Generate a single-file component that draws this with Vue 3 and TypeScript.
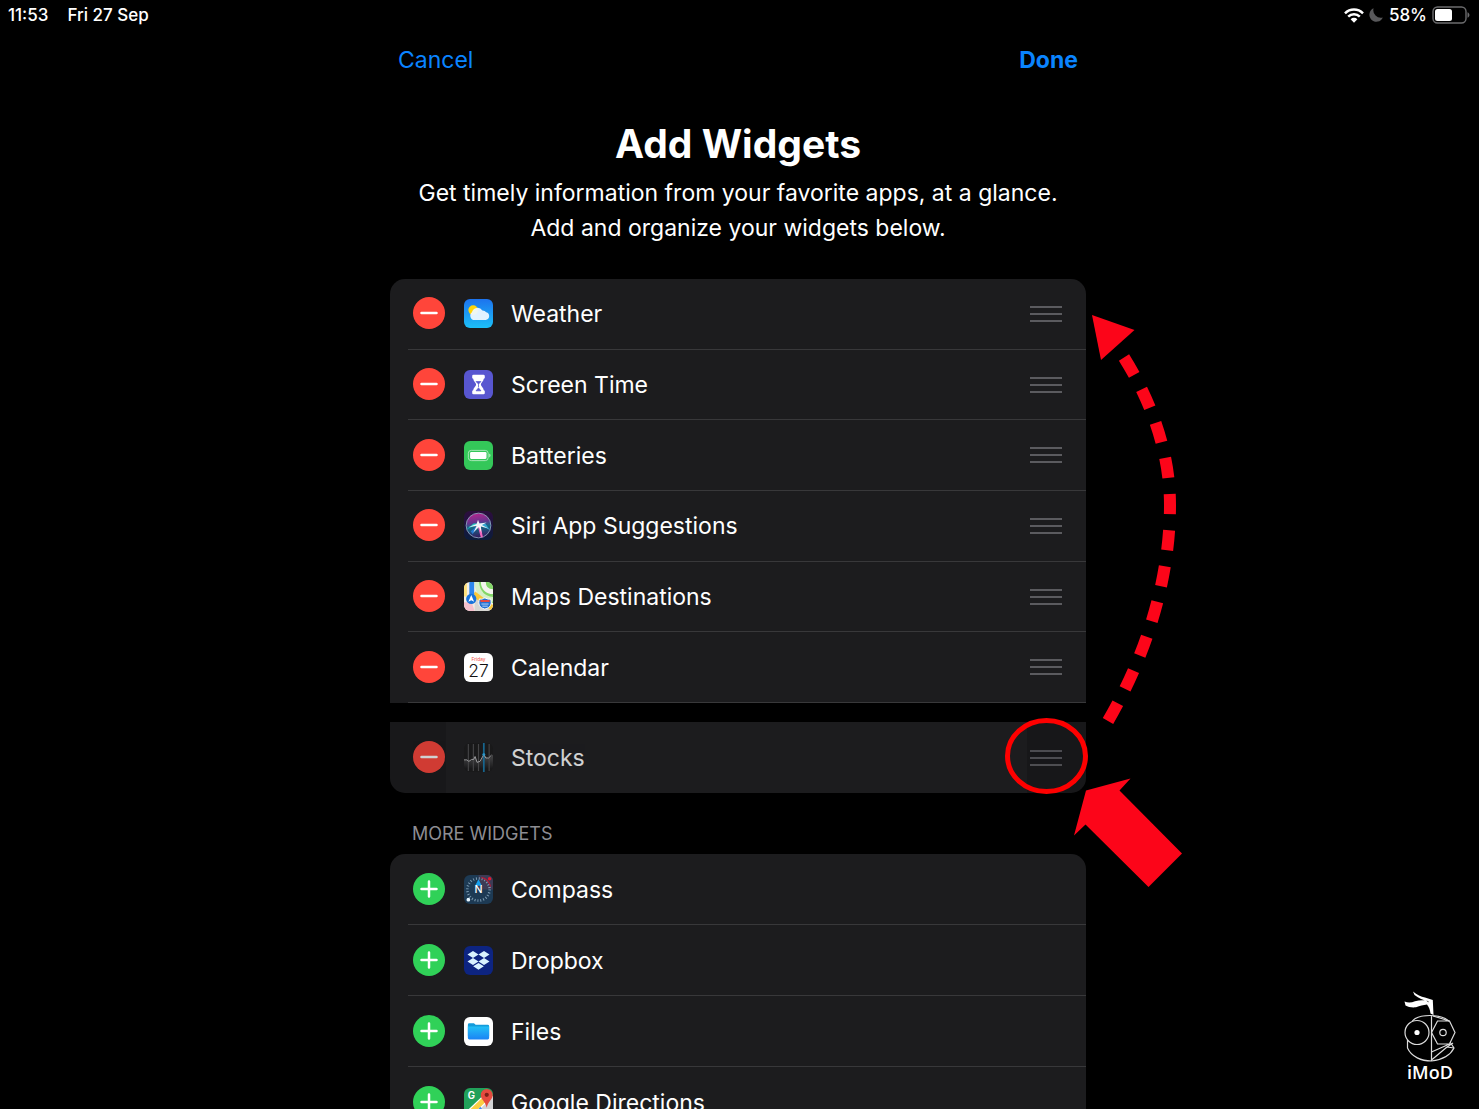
<script setup lang="ts">
interface Widget {
  id: string
  name: string
}

const active: Widget[] = [
  { id: 'weather', name: 'Weather' },
  { id: 'screentime', name: 'Screen Time' },
  { id: 'batteries', name: 'Batteries' },
  { id: 'siri', name: 'Siri App Suggestions' },
  { id: 'maps', name: 'Maps Destinations' },
  { id: 'calendar', name: 'Calendar' },
]
const dragged: Widget[] = [{ id: 'stocks', name: 'Stocks' }]
const more: Widget[] = [
  { id: 'compass', name: 'Compass' },
  { id: 'dropbox', name: 'Dropbox' },
  { id: 'files', name: 'Files' },
  { id: 'google', name: 'Google Directions' },
]

const groups = [
  { key: 'active', items: active, add: false },
  { key: 'dragged', items: dragged, add: false },
  { key: 'more', items: more, add: true },
]
</script>

<template>
  <div class="screen">
    <header class="status">
      <div class="status-side">
        <span>11:53</span>
        <span>Fri 27 Sep</span>
      </div>
      <div class="status-side right">
        <svg viewBox="0 0 20 15" width="20" height="15" aria-hidden="true">
          <g fill="none" stroke="#fff" stroke-width="2.5">
            <path d="M1 5.3a12.8 12.8 0 0 1 18 0" />
            <path d="M4.2 8.7a8.3 8.3 0 0 1 11.6 0" />
          </g>
          <path d="M6.6 11.2a4.9 4.9 0 0 1 6.8 0L10 14.7z" fill="#fff" />
        </svg>
        <svg viewBox="0 0 15 14" width="15" height="14" aria-hidden="true">
          <path d="M4.600.3a7 7 0 1 0 9.200 9.200A7.500 7.500 0 0 1 4.600.3z" fill="#58585a" />
        </svg>
        <span>58%</span>
        <svg viewBox="0 0 38 18" width="38" height="18" aria-hidden="true">
          <rect x="1" y="1" width="33" height="16" rx="4.5" fill="none" stroke="#6c6c6e" stroke-width="1.4" />
          <path d="M35.5 6.300c2.600 1 2.600 4.400 0 5.400z" fill="#6c6c6e" />
          <rect x="3" y="3" width="17" height="12" rx="2.500" fill="#fff" />
        </svg>
      </div>
    </header>

    <main class="panel">
      <nav class="actions">
        <button type="button" class="text-btn">Cancel</button>
        <button type="button" class="text-btn strong">Done</button>
      </nav>
      <h1>Add Widgets</h1>
      <p class="intro">
        Get timely information from your favorite apps, at a glance.<br />
        Add and organize your widgets below.
      </p>

      <template v-for="group in groups" :key="group.key">
        <h2 v-if="group.add">MORE WIDGETS</h2>
        <ul :class="['list', group.key]">
          <li v-for="w in group.items" :key="w.id">
            <button type="button" :class="['toggle', { add: group.add }]" :aria-label="(group.add ? 'Add ' : 'Remove ') + w.name">
              <svg viewBox="0 0 32 32" width="32" height="32">
                <path :d="group.add ? 'M8.500 16h15M16 8.500v15' : 'M8.500 16h15'" fill="none" stroke="#fff" stroke-width="2.500" stroke-linecap="round" />
              </svg>
            </button>

            <svg class="icon" viewBox="0 0 30 30" width="29" height="29" aria-hidden="true">
              <g v-if="w.id === 'weather'">
                <defs>
                  <linearGradient id="sky" x1="0" y1="0" x2="0" y2="1">
                    <stop offset="0" stop-color="#1d73ee" />
                    <stop offset="1" stop-color="#1cc0f8" />
                  </linearGradient>
                </defs>
                <rect width="30" height="30" fill="url(#sky)" />
                <circle cx="9.500" cy="11.500" r="5" fill="#ffd60a" />
                <path d="M11 21.800a4.500 4.500 0 0 1-2.800-8 6 6 0 0 1 10.800-2 4.800 4.800 0 0 1 4 1.800 4.200 4.200 0 0 1-.6 8.200z" fill="#eef8ff" fill-opacity=".94" />
              </g>

              <g v-else-if="w.id === 'screentime'">
                <rect width="30" height="30" fill="#5856d0" />
                <rect x="8.500" y="5" width="13" height="4" rx="1.300" fill="#fff" />
                <rect x="8.500" y="21" width="13" height="4" rx="1.300" fill="#fff" />
                <path d="M9.500 8c0 4 3 5 3 7s-3 3-3 7h11c0-4-3-5-3-7s3-3 3-7z" fill="#fff" />
                <path d="M12.500 12h5L15 14.500zM15 14v4M12.500 21.500l2.500-3 2.500 3z" fill="#5856d0" stroke="#5856d0" stroke-width=".8" />
              </g>

              <g v-else-if="w.id === 'batteries'">
                <rect width="30" height="30" fill="#34c759" />
                <rect x="4.500" y="9.700" width="20.500" height="10.600" rx="3" fill="none" stroke="#a9e8b9" stroke-width="1" />
                <rect x="6.300" y="11.500" width="17" height="7" rx="1.200" fill="#fff" />
                <path d="M26 13c2 .8 2 3.200 0 4z" fill="#a9e8b9" />
              </g>

              <g v-else-if="w.id === 'siri'">
                <defs>
                  <linearGradient id="siriBg" x1="0" y1="0" x2="0" y2="1">
                    <stop offset="0" stop-color="#2c0d3d" />
                    <stop offset="1" stop-color="#0b1c3c" />
                  </linearGradient>
                  <linearGradient id="siriOrb" x1="0" y1="0" x2=".15" y2="1">
                    <stop offset="0" stop-color="#c4218d" />
                    <stop offset=".42" stop-color="#66348f" />
                    <stop offset=".62" stop-color="#126b87" />
                    <stop offset="1" stop-color="#342063" />
                  </linearGradient>
                </defs>
                <rect width="30" height="30" fill="url(#siriBg)" />
                <circle cx="15" cy="15" r="12.800" fill="url(#siriOrb)" stroke="#8fa3c0" stroke-width=".9" />
                <path d="M15 13 3 19l7-6z" fill="#22cfc5" />
                <path d="m15 13 12 7-5-7z" fill="#39b9e5" opacity=".8" />
                <path d="m14 15 3.500 12.500 2-.5-2.500-12z" fill="#f067bd" />
                <path d="m14 15-5 9-2-3z" fill="#2378cf" />
                <path d="m14.500 9 1.500 4 7.500-1-5 2.500 6.500 3.500-7.500-2 .5 7-2.500-6.500-6 6 3.500-7-8 1 8-3z" fill="#fff" opacity=".92" />
              </g>

              <g v-else-if="w.id === 'maps'">
                <rect width="30" height="30" fill="#f2efe7" />
                <path d="M14 0h16v22L14 11z" fill="#83d768" />
                <path d="M13 0c1 11 7 17 17 18" fill="none" stroke="#d4efc6" stroke-width="5" />
                <path d="M20 0c0 6 4 10 10 10" fill="none" stroke="#f4f4ef" stroke-width="5" />
                <path d="m11 15 19 10v5H11z" fill="#d7d6d2" />
                <path d="m10 12 21 16" stroke="#fac93b" stroke-width="5.500" />
                <path d="M0 0h3v15H0z" fill="#ffe17b" />
                <path d="M0 21h8l3 9H0z" fill="#f5c1cd" />
                <path d="M8 0v16" stroke="#2c86ee" stroke-width="5" />
                <circle cx="7.500" cy="17.500" r="5.300" fill="#1874db" />
                <path d="m7.500 13.500 3 7-3-1.500-3 1.500z" fill="#fff" />
                <path d="M16 17.500c3 1 4-1 5.500-1s3 2 6 1c1.500 5 .5 9-6 10.500-6-1.500-7-5.500-5.500-10.500z" fill="#2471d1" stroke="#fff" stroke-width="1" />
                <path d="M17 18.500h9.500v2.300H17z" fill="#e34840" />
                <path d="M18 22.800h7.500M19 25h5.500" stroke="#b5d6f8" stroke-width="1" />
              </g>

              <g v-else-if="w.id === 'calendar'">
                <rect width="30" height="30" fill="#fff" />
                <text x="15" y="8.500" text-anchor="middle" font-size="5" fill="#f34f45">Friday</text>
                <text x="15" y="24.500" text-anchor="middle" font-size="18" font-weight="300" fill="#111">27</text>
              </g>

              <g v-else-if="w.id === 'stocks'">
                <defs>
                  <linearGradient id="stockFill" x1="0" y1="0" x2="0" y2="1">
                    <stop offset="0" stop-color="#5c5c5e" />
                    <stop offset="1" stop-color="#1c1c1e" />
                  </linearGradient>
                </defs>
                <rect width="30" height="30" fill="#19191a" />
                <path d="M0 18h4l2 1 3-2 2-3 3 6 3-1 4-7 3 4 3-1 3-3v14H0z" fill="url(#stockFill)" opacity=".7" />
                <path d="M4.500 1v28M9.700 1v28M15 1v28M26 1v28" stroke="#444446" stroke-width="1.200" />
                <path d="M20.500 0v30" stroke="#17658e" stroke-width="1.800" />
                <path d="M0 17.500h3l2 1.500 3-2h2l1.500-3 2 6 3-1 4-7 2 3.500h3l3-3" fill="none" stroke="#a0a0a2" stroke-width="1" />
                <circle cx="20.500" cy="12" r="1.500" fill="#2a96c8" />
              </g>

              <g v-else-if="w.id === 'compass'">
                <rect width="30" height="30" fill="#1d3a54" />
                <path d="M15 15V0h15v15z" fill="#3d3b55" />
                <circle cx="15" cy="15" r="11.500" fill="none" stroke="#7f9db4" stroke-width="2.600" stroke-dasharray="1 2.010" />
                <path d="M18 2.500a13 13 0 0 1 9.500 9.500" fill="none" stroke="#b01c3a" stroke-width="1.200" />
                <path d="m15 4.500 3.500 6.500h-7z" fill="#16a0ee" />
                <circle cx="26.500" cy="3.800" r="1.800" fill="#e5172f" />
                <circle cx="4.500" cy="25.500" r="1.900" fill="#e8f6ff" />
                <text x="15" y="19" text-anchor="middle" font-size="11" font-weight="500" fill="#fff">N</text>
              </g>

              <g v-else-if="w.id === 'dropbox'">
                <rect width="30" height="30" fill="#0d2481" />
                <path d="m9.300 5.200 5.700 3.600-5.700 3.600-5.700-3.600zm11.400 0 5.700 3.600-5.700 3.600L15 8.800zM9.300 12.400 15 16l-5.700 3.600L3.600 16zm11.400 0 5.700 3.600-5.700 3.600L15 16zM15 17.500l5.500 3.500-5.500 3.600L9.500 21z" fill="#d9f2ff" />
              </g>

              <g v-else-if="w.id === 'files'">
                <defs>
                  <linearGradient id="folder" x1="0" y1="0" x2="0" y2="1">
                    <stop offset="0" stop-color="#23c0f6" />
                    <stop offset="1" stop-color="#1b83f5" />
                  </linearGradient>
                </defs>
                <rect width="30" height="30" fill="#fff" />
                <path d="M4 8a1.500 1.500 0 0 1 1.500-1.500h4.800l1.700 1.500h12.500A1.500 1.500 0 0 1 26 9.500V20H4z" fill="#149bdb" />
                <path d="M4 9.800h22v12a1.500 1.500 0 0 1-1.500 1.500h-19A1.500 1.500 0 0 1 4 21.800z" fill="url(#folder)" />
              </g>

              <g v-else>
                <rect width="30" height="30" fill="#21a15a" />
                <path d="M19 12 30 8v22H12z" fill="#d2d3d5" />
                <path d="M-2 34 23 10" stroke="#fff" stroke-width="8" />
                <path d="M-2 34 23 10" stroke="#fbce43" stroke-width="5.500" />
                <path d="m8 30 9-10.500L25 30z" fill="#4389f5" />
                <path d="M23.500 1a6.200 6.200 0 0 1 6.200 6.200c0 5-4.700 6-6.200 13.300-1.500-7.300-6.200-8.300-6.200-13.300A6.200 6.200 0 0 1 23.500 1z" fill="#e54a3f" />
                <circle cx="23.500" cy="7" r="2.200" fill="#7b2019" />
                <text x="7.500" y="11.500" text-anchor="middle" font-size="10" font-weight="700" fill="#fff">G</text>
              </g>
            </svg>

            <span class="name">{{ w.name }}</span>
            <button v-if="!group.add" type="button" class="handle" :aria-label="'Reorder ' + w.name">
              <i></i><i></i><i></i>
            </button>
          </li>
        </ul>
      </template>

      <svg class="guide" viewBox="1000 300 200 600" width="200" height="600" aria-hidden="true">
        <path d="M1124 357.500C1153 404 1170 455 1170 505C1170 575 1149 650 1108 721" pathLength="380" stroke-dasharray="20 16" fill="none" stroke="#fc0519" stroke-width="12" />
        <path d="m1092 315 42.500 15-33.500 30z" fill="#fc0519" />
        <ellipse cx="1046.500" cy="756" rx="39" ry="35.500" fill="none" stroke="#fe0000" stroke-width="5" />
        <path d="m1086 790.500 44.500-12-11 12 62.500 63-33.500 33.500-63-62.500-11.500 11z" fill="#fc0519" />
      </svg>
    </main>

    <div class="watermark">
      <svg viewBox="0 0 52 72" width="52" height="72" aria-hidden="true">
        <path d="M9 .5c4 3.500 8 5 12 6l7.800 2.500.7 15-3-1.500c-.5-4-1.500-6.500-3.500-9-4 .5-7 1-11 2.800-4 .5-8-.3-10.500-1.800l-1-4c4 1.500 7 1 10.500-.3 4-1 7-1.200 11-.7l3 2-1-1.500c-5-1-9-2.500-13.500-6z" fill="#fff" />
        <g fill="none" stroke="#dcdcdc" stroke-width="1.200">
          <circle cx="13" cy="41.500" r="12" />
          <circle cx="39" cy="41.500" r="3.200" />
          <path d="M8 30.500c6-8 29-8 37.500 0M27.500 24v46M3.500 49v8c4 9 14 13 24 13 8-1 18-4 22.500-13l-4-6" />
          <path d="M33.500 30h12l5.500 11.500-5.500 11.500h-12l-6-11.500zM29 25l16.500 5M27.500 61l18-8M43 56l7 1M43 56l6-4M27.500 69 43 56" />
        </g>
        <circle cx="13" cy="41.500" r="2.600" fill="#fff" />
      </svg>
      <span>iMoD</span>
    </div>
  </div>
</template>

<style>
body {
  background: #000;
}
</style>

<style scoped>
.screen {
  position: relative;
  height: 100vh;
  overflow: hidden;
  background: #000;
  color: #fff;
  font-family: Inter, "Liberation Sans", sans-serif;
}

button {
  padding: 0;
  border: 0;
  background: none;
  font-family: inherit;
}

svg {
  display: block;
}

.status {
  display: flex;
  justify-content: space-between;
  height: 30px;
  padding: 0 9px 0 8px;
  font-size: 17px;
  font-weight: 500;
  line-height: 30px;
}

.status-side {
  display: flex;
  align-items: center;
  gap: 19px;
}

.status-side.right {
  gap: 5px;
}

.panel {
  position: relative;
  max-width: 696px;
  margin: 0 auto;
  padding-right: 3px;
}

.actions {
  display: flex;
  justify-content: space-between;
  height: 60px;
  padding: 0 8px;
}

.text-btn {
  color: #0a84ff;
  font-size: 23px;
  line-height: 60px;
}

.strong {
  font-weight: 700;
}

h1 {
  margin: 28px 0 0;
  font-size: 39px;
  font-weight: 700;
  line-height: 52px;
  text-align: center;
}

.intro {
  margin: 6px 0 33px;
  font-size: 23px;
  line-height: 35px;
  text-align: center;
}

.list {
  display: flex;
  flex-direction: column;
  margin: 0;
  padding: 0;
  overflow: hidden;
  background: #1c1c1e;
  list-style: none;
}

.active {
  height: 424px;
  border-radius: 15px 15px 0 0;
}

.dragged {
  height: 71px;
  margin-top: 19px;
  border-radius: 0 0 15px 15px;
  background: linear-gradient(
    to right,
    #18181a 56px,
    #1c1c1e 56px,
    #1c1c1e calc(100% - 59px),
    #171719 calc(100% - 59px)
  );
}

.more {
  border-radius: 15px 15px 0 0;
}

li {
  display: flex;
  flex: 1 0 auto;
  align-items: center;
  margin-left: 18px;
  padding: 0 24px 0 5px;
  border-bottom: 1px solid #38383a;
}

.more li {
  height: 70px;
}

.dragged li {
  border-bottom: 0;
}

.toggle {
  width: 32px;
  height: 32px;
  margin: 0 19px 1px 0;
  border-radius: 50%;
  background: #ff453a;
}

.toggle.add {
  background: #30d158;
}

.icon {
  margin-right: 18px;
  border-radius: 6px;
}

.name {
  flex: 1;
  padding-top: 1px;
  font-size: 23px;
  line-height: 32px;
}

.handle {
  display: flex;
  flex-direction: column;
  gap: 5px;
  width: 32px;
}

.handle i {
  height: 2px;
  background: #5b5b5f;
}

.dragged .toggle,
.dragged .name,
.dragged .handle {
  opacity: 0.8;
}

h2 {
  margin: 29px 0 8px 22px;
  color: #8d8d93;
  font-size: 18px;
  font-weight: 400;
  line-height: 24px;
}

.guide {
  position: absolute;
  top: 270px;
  left: 610px;
}

.watermark {
  position: absolute;
  right: 23px;
  bottom: 28px;
  display: flex;
  flex-direction: column;
  align-items: center;
  font-family: "Open Sans", sans-serif;
  font-size: 18px;
  font-weight: 600;
  line-height: 18px;
}
</style>
